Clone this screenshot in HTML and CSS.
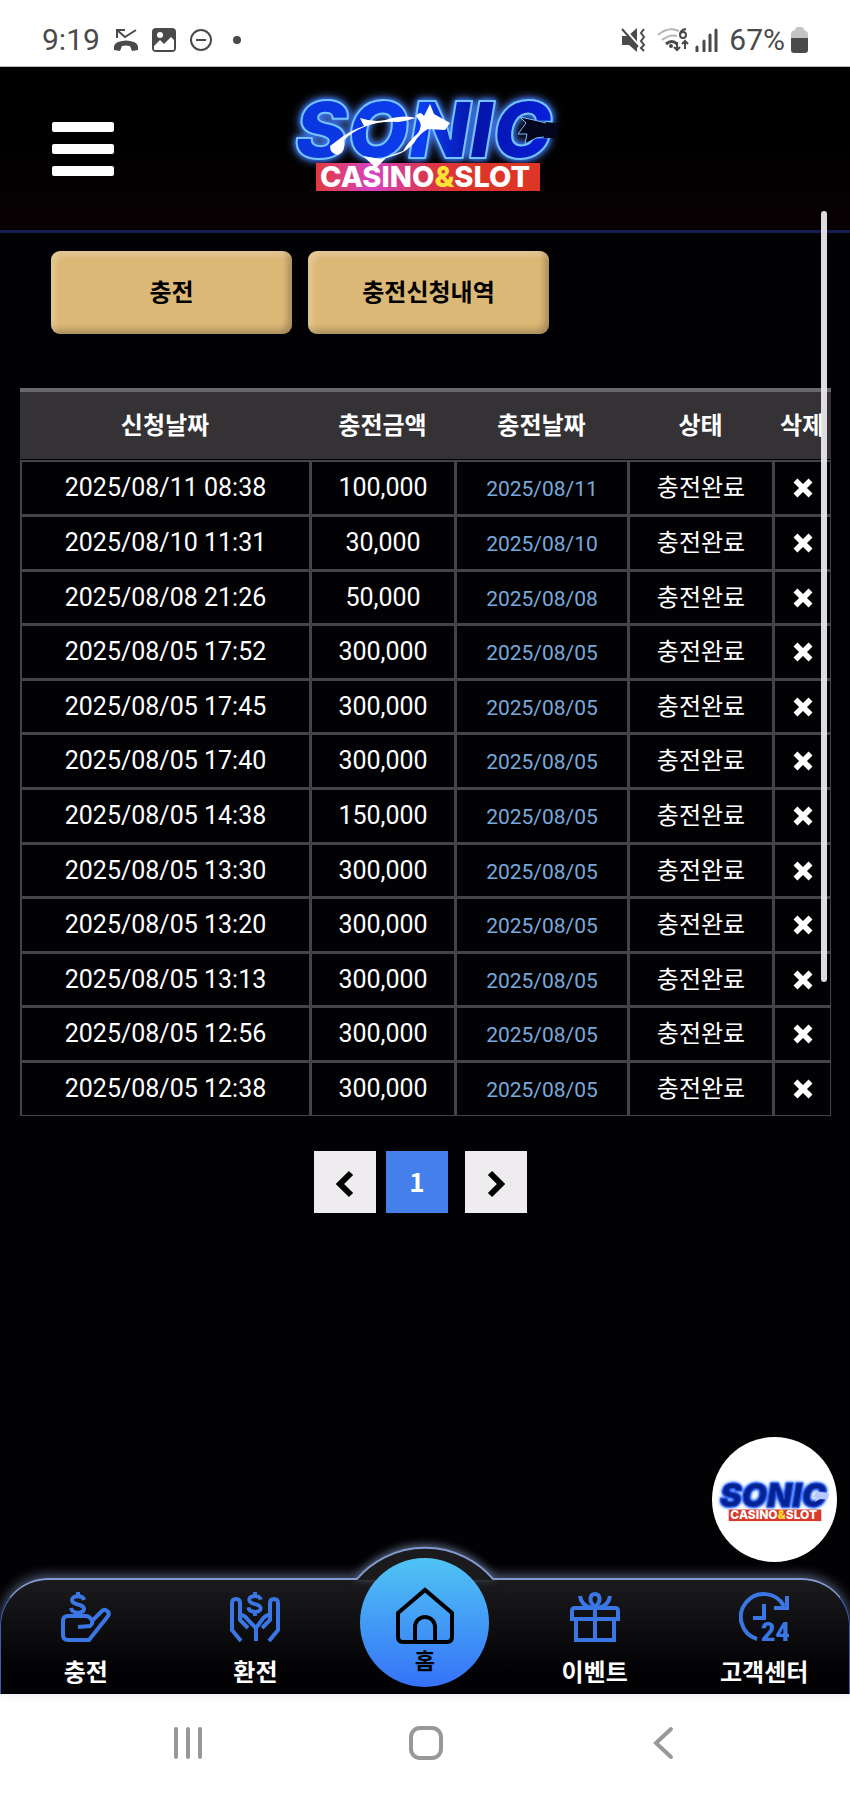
FILE: index.html
```html
<!DOCTYPE html>
<html lang="ko">
<head>
    <meta charset="UTF-8">
    <meta name="viewport" content="width=device-width, initial-scale=1">
    <title>충전신청내역</title>
    <link rel="stylesheet" href="styles.css">
</head>
<body>
    <!-- shared symbols -->
    <svg class="symbols" aria-hidden="true">
        <defs>
            <linearGradient id="word-fill" x1="0" y1="0" x2="1" y2="0">
                <stop offset="0" stop-color="#0a35dc"/>
                <stop offset="0.5" stop-color="#0c3df0"/>
                <stop offset="0.7" stop-color="#0414a8"/>
                <stop offset="1" stop-color="#0620dc"/>
            </linearGradient>
            <linearGradient id="band-fill" x1="0" y1="0" x2="1" y2="0">
                <stop offset="0" stop-color="#e03a3c"/>
                <stop offset="0.25" stop-color="#d843c4"/>
                <stop offset="0.5" stop-color="#d9354c"/>
                <stop offset="0.7" stop-color="#dd3526"/>
            </linearGradient>
        </defs>
        <symbol id="i-times" viewBox="0 0 18 18">
            <path d="M4 4l10 10M14 4L4 14" fill="none" stroke="#fff" stroke-width="5" stroke-linecap="square"/>
        </symbol>
        <symbol id="i-dollar" viewBox="0 0 18 26">
            <path d="M15 8C14 3 3 3 3 8c0 6 12 3 12 9 0 5-12 5-13-1M9 0v4M9 20v5" fill="none" stroke="#3a76e4" stroke-width="4"/>
        </symbol>
    </svg>

    <div class="status-bar">
        <div class="status-left">
            <span>9:19</span>
            <svg width="26" height="24" viewBox="0 0 26 24" aria-hidden="true">
                <path d="M4 10V2h8M4 2l8 7L23 2" fill="none" stroke="#4a4a4a" stroke-width="2"/>
                <path d="M1 22q-1-6 4-8 8-3 16 0 5 2 4 8l-6 1-2-5q-4-1-8 0l-2 5z" fill="#4a4a4a"/>
            </svg>
            <svg width="24" height="24" viewBox="0 0 24 24" aria-hidden="true">
                <rect width="24" height="24" rx="4" fill="#4a4a4a"/>
                <circle cx="8" cy="7" r="3" fill="#fff"/>
                <path d="M2 18l6-6 4 4 7-7 3 3v9q0 1-1 1H3q-1 0-1-1z" fill="#fff"/>
            </svg>
            <svg width="24" height="24" viewBox="0 0 24 24" aria-hidden="true">
                <circle cx="12" cy="12" r="10" fill="none" stroke="#4a4a4a" stroke-width="2"/>
                <path d="M7 12h10" stroke="#4a4a4a" stroke-width="2"/>
            </svg>
            <i class="dot"></i>
        </div>
        <div class="status-right">
            <svg width="26" height="24" viewBox="0 0 26 24" aria-hidden="true">
                <path d="M1 8h6l9-8v24l-8-7H1z" fill="#4a4a4a"/>
                <path d="M2 0l16 18" stroke="#fff" stroke-width="3"/>
                <path d="M1 1l16 18" stroke="#4a4a4a" stroke-width="2"/>
                <path d="M23 1l-3 4 3 4-3 4 3 4-3 3 3 3" fill="none" stroke="#4a4a4a" stroke-width="2"/>
            </svg>
            <svg class="wifi" width="32" height="24" viewBox="0 0 32 24" aria-hidden="true">
                <path d="M1 7q10-9 21-4M5 12q8-6 15-4" fill="none" stroke="#b5b5b5" stroke-width="2"/>
                <path d="M9 16q6-5 11 0" fill="none" stroke="#4a4a4a" stroke-width="3"/>
                <circle cx="14" cy="18" r="2" fill="#4a4a4a"/>
                <path d="M29 1q-6 1-6 6" fill="none" stroke="#4a4a4a" stroke-width="2"/>
                <circle cx="26" cy="7" r="3" fill="none" stroke="#4a4a4a" stroke-width="2"/>
                <path d="M20 14v8M17 19l3 3 3-3M28 21v-8M25 16l3-3 3 3" fill="none" stroke="#4a4a4a" stroke-width="2"/>
            </svg>
            <svg width="24" height="24" viewBox="0 0 24 24" aria-hidden="true">
                <path d="M2 19v4M9 13v10M15 7v16M21 2v21" stroke="#4a4a4a" stroke-width="3" stroke-linecap="round"/>
            </svg>
            <span class="percent">67%</span>
            <svg width="17" height="26" viewBox="0 0 17 26" aria-hidden="true">
                <path d="M0 7q0-3 4-4 0-3 3-3h3q3 0 3 3 4 1 4 4v5H0z" fill="#c4c4c4"/>
                <path d="M0 11h17v12q0 3-3 3H3q-3 0-3-3z" fill="#4a4a4a"/>
            </svg>
        </div>
    </div>

    <header class="header">
        <button type="button" class="menu-btn" aria-label="메뉴">
            <span></span>
            <span></span>
            <span></span>
        </button>
        <a href="#" class="logo">
            <svg width="310" height="130" viewBox="0 0 310 130" role="img" aria-label="SONIC CASINO&amp;SLOT">
                <text class="word" x="25" y="78">SONIC</text>
                <path d="M290 44l-26-4-14-3 6 6-8 11h9l-2 10 11-6 19 0z" fill="#03061c"/>
                <path d="M276 43l-12-3-14-3 6 6-8 11h9l-2 10 11-6 8-1" fill="none" stroke="#74c4ff" stroke-width="1"/>
                <rect x="46" y="83" width="224" height="28" fill="url(#band-fill)"/>
                <text class="band" x="50" y="107">CASINO<tspan fill="#fbe234">&amp;</tspan>SLOT</text>
                <path d="M68 60q11-9 26-14l-4-8q18 6 32 0 14-3 24 0-10 3-18 4-20-1-34 5-12 5-20 13 2 12-6 15-8-1-8-9zM146 36q4-6 8 0l6-12 4 10 16 9-5 7-17-1q-9 5-14 14-8 9-18 12l-10 3-10 10-13-12 18 3 22-8q6-10 15-18 4-6 2-11z" fill="#fff"/>
            </svg>
        </a>
    </header>

    <main class="main">
        <nav class="tabs">
            <button type="button" class="tab">충전</button>
            <button type="button" class="tab">충전신청내역</button>
        </nav>

        <table class="history">
            <colgroup>
                <col>
                <col class="col-amount">
                <col class="col-date">
                <col class="col-state">
                <col class="col-delete">
            </colgroup>
            <thead>
                <tr><th>신청날짜</th><th>충전금액</th><th>충전날짜</th><th>상태</th><th>삭제</th></tr>
            </thead>
            <tbody>
                <tr><td>2025/08/11 08:38</td><td>100,000</td><td class="date">2025/08/11</td><td class="state">충전완료</td><td><button type="button" class="delete" aria-label="삭제"><svg><use href="#i-times"/></svg></button></td></tr>
                <tr><td>2025/08/10 11:31</td><td>30,000</td><td class="date">2025/08/10</td><td class="state">충전완료</td><td><button type="button" class="delete" aria-label="삭제"><svg><use href="#i-times"/></svg></button></td></tr>
                <tr><td>2025/08/08 21:26</td><td>50,000</td><td class="date">2025/08/08</td><td class="state">충전완료</td><td><button type="button" class="delete" aria-label="삭제"><svg><use href="#i-times"/></svg></button></td></tr>
                <tr><td>2025/08/05 17:52</td><td>300,000</td><td class="date">2025/08/05</td><td class="state">충전완료</td><td><button type="button" class="delete" aria-label="삭제"><svg><use href="#i-times"/></svg></button></td></tr>
                <tr><td>2025/08/05 17:45</td><td>300,000</td><td class="date">2025/08/05</td><td class="state">충전완료</td><td><button type="button" class="delete" aria-label="삭제"><svg><use href="#i-times"/></svg></button></td></tr>
                <tr><td>2025/08/05 17:40</td><td>300,000</td><td class="date">2025/08/05</td><td class="state">충전완료</td><td><button type="button" class="delete" aria-label="삭제"><svg><use href="#i-times"/></svg></button></td></tr>
                <tr><td>2025/08/05 14:38</td><td>150,000</td><td class="date">2025/08/05</td><td class="state">충전완료</td><td><button type="button" class="delete" aria-label="삭제"><svg><use href="#i-times"/></svg></button></td></tr>
                <tr><td>2025/08/05 13:30</td><td>300,000</td><td class="date">2025/08/05</td><td class="state">충전완료</td><td><button type="button" class="delete" aria-label="삭제"><svg><use href="#i-times"/></svg></button></td></tr>
                <tr><td>2025/08/05 13:20</td><td>300,000</td><td class="date">2025/08/05</td><td class="state">충전완료</td><td><button type="button" class="delete" aria-label="삭제"><svg><use href="#i-times"/></svg></button></td></tr>
                <tr><td>2025/08/05 13:13</td><td>300,000</td><td class="date">2025/08/05</td><td class="state">충전완료</td><td><button type="button" class="delete" aria-label="삭제"><svg><use href="#i-times"/></svg></button></td></tr>
                <tr><td>2025/08/05 12:56</td><td>300,000</td><td class="date">2025/08/05</td><td class="state">충전완료</td><td><button type="button" class="delete" aria-label="삭제"><svg><use href="#i-times"/></svg></button></td></tr>
                <tr><td>2025/08/05 12:38</td><td>300,000</td><td class="date">2025/08/05</td><td class="state">충전완료</td><td><button type="button" class="delete" aria-label="삭제"><svg><use href="#i-times"/></svg></button></td></tr>
            </tbody>
        </table>

        <div class="pagination">
            <button type="button" class="page" aria-label="이전">
                <svg width="18" height="28" viewBox="0 0 18 28"><path d="M15 3L4 14l11 11" fill="none" stroke="#000" stroke-width="6"/></svg>
            </button>
            <button type="button" class="page active">1</button>
            <button type="button" class="page next" aria-label="다음">
                <svg width="18" height="28" viewBox="0 0 18 28"><path d="M3 3l11 11L3 25" fill="none" stroke="#000" stroke-width="6"/></svg>
            </button>
        </div>
    </main>

    <div class="scroll-thumb"></div>

    <nav class="bottom-nav">
        <svg class="bump" width="190" height="60" viewBox="0 0 190 60" aria-hidden="true">
            <path d="M26 60A90 90 0 0 1 164 60z" fill="#1b1b1d"/>
            <path d="M26 60A90 90 0 0 1 164 60" fill="none" stroke="#8198d0" stroke-width="2"/>
        </svg>
        <a href="#" class="float-btn">
            <svg width="124" height="58" viewBox="8 -10 300 140" role="img" aria-label="SONIC CASINO&amp;SLOT">
                <text class="word small" x="25" y="78">SONIC</text>
                <path d="M290 44l-26-4-14-3 6 6-8 11h9l-2 10 11-6 19 0z" fill="#b9c9ff"/>
                <rect x="46" y="83" width="224" height="28" fill="#d83a2c"/>
                <text class="band" x="50" y="107">CASINO<tspan fill="#fbe234">&amp;</tspan>SLOT</text>
            </svg>
        </a>
        <a href="#" class="nav-item">
            <svg width="50" height="50" viewBox="0 0 50 50" aria-hidden="true">
                <use href="#i-dollar" x="8" y="0" width="18" height="26"/>
                <path d="M17 35l12-1q4-3 1-7-2-3-5-3H7q-5 0-5 5v14q0 5 5 5h21l19-24q2-3-1-5-3-3-6 1L30 30" fill="none" stroke="#3a76e4" stroke-width="4"/>
            </svg>
            <span>충전</span>
        </a>
        <a href="#" class="nav-item">
            <svg width="50" height="50" viewBox="0 0 50 50" aria-hidden="true">
                <use href="#i-dollar" x="16" y="0" width="18" height="25"/>
                <path d="M11 49L2 38V11q0-4 4-4t4 4v17l8 8M10 23q5 0 8 5l8 8v13M39 49l9-11V11q0-4-4-4t-4 4v17l-8 8M40 23q-5 0-8 5l-6 8" fill="none" stroke="#3a76e4" stroke-width="4"/>
            </svg>
            <span>환전</span>
        </a>
        <a href="#" class="nav-home">
            <svg width="58" height="57" viewBox="0 0 58 57" aria-hidden="true">
                <path d="M2 26L29 3l27 23v24q0 5-5 5H7q-5 0-5-5zM19 55V40a10 10 0 0 1 20 0v15" fill="none" stroke="#000" stroke-width="4"/>
            </svg>
            <span>홈</span>
        </a>
        <a href="#" class="nav-item">
            <svg width="50" height="50" viewBox="0 0 50 50" aria-hidden="true">
                <path d="M5 16h40q3 0 3 3v8H2v-8q0-3 3-3zM6 27v21h38V27M25 16v32M25 15c-7-6-5-13 0-13s7 7 0 13M10 4q1 9 11 12M40 4q-1 9-11 12" fill="none" stroke="#3a76e4" stroke-width="4"/>
            </svg>
            <span>이벤트</span>
        </a>
        <a href="#" class="nav-item">
            <svg width="50" height="50" viewBox="0 0 50 50" aria-hidden="true">
                <path d="M18 47A23 23 0 1 1 45 14M48 4v12H35M25 12v14H14" fill="none" stroke="#3a76e4" stroke-width="4"/>
                <text class="hours" x="22" y="49">24</text>
            </svg>
            <span>고객센터</span>
        </a>
    </nav>

    <div class="system-nav">
        <button type="button" aria-label="최근 앱">
            <svg width="34" height="34" viewBox="0 0 34 34"><path d="M5 3v28M17 3v28M29 3v28" stroke="#989898" stroke-width="4" stroke-linecap="round"/></svg>
        </button>
        <button type="button" aria-label="홈 화면">
            <svg width="34" height="34" viewBox="0 0 34 34"><rect x="2" y="2" width="30" height="30" rx="9" fill="none" stroke="#989898" stroke-width="4"/></svg>
        </button>
        <button type="button" aria-label="뒤로">
            <svg width="34" height="34" viewBox="0 0 34 34"><path d="M25 3L10 17l15 14" fill="none" stroke="#989898" stroke-width="4" stroke-linecap="round"/></svg>
        </button>
    </div>
</body>
</html>
```
FILE: styles.css
```css
* {
    box-sizing: border-box;
}
body {
    position: relative;
    display: flex;
    flex-direction: column;
    min-height: 100vh;
    margin: 0;
    background: #020104;
    color: #fff;
    font-family: Roboto, 'Noto Sans CJK KR', sans-serif;
    font-size: 24px;
}
button {
    padding: 0;
    border: 0;
    background: none;
    color: inherit;
    font: inherit;
    cursor: pointer;
}
a {
    color: inherit;
    text-decoration: none;
}
svg {
    display: block;
}
.symbols {
    position: absolute;
    width: 0;
    height: 0;
}

/* status bar */
.status-bar {
    display: flex;
    justify-content: space-between;
    align-items: center;
    height: 67px;
    padding: 14px 42px 0;
    border-bottom: 1px solid #bbb;
    background: #fff;
    color: #4a4a4a;
    font-size: 30px;
    line-height: 36px;
}
.status-left {
    display: flex;
    align-items: center;
    gap: 13px;
}
.status-right {
    display: flex;
    align-items: center;
    gap: 6px;
}
.wifi {
    margin-left: 4px;
}
.dot {
    width: 8px;
    height: 8px;
    margin-left: 7px;
    border-radius: 50%;
    background: #4a4a4a;
}
.percent {
    margin-left: 4px;
}

/* header */
.header {
    display: grid;
    grid-template-columns: 1fr auto 1fr;
    align-items: center;
    padding: 13px 52px 20px;
    border-bottom: 3px solid #161f4f;
    background: linear-gradient(#000 40%, #080103);
}
.menu-btn {
    display: flex;
    flex-direction: column;
    gap: 12px;
    width: 62px;
    margin-top: 8px;
}
.menu-btn span {
    height: 10px;
    border-radius: 2px;
    background: #fff;
}
.word {
    fill: url(#word-fill);
    stroke: #74c4ff;
    stroke-width: 2px;
    stroke-linejoin: round;
    font-family: Inter, sans-serif;
    font-size: 79px;
    font-weight: 900;
    font-style: italic;
    filter: drop-shadow(0 0 2px #2a66ff) drop-shadow(0 0 4px #5a90ff);
}
.word.small {
    fill: #062190;
    stroke: #2454e0;
    stroke-width: 3px;
}
.band {
    fill: #fff;
    font-family: Inter, sans-serif;
    font-size: 29px;
    font-weight: 800;
}

/* content */
.main {
    flex: 1;
    padding: 18px 19px 0 20px;
}
.tabs {
    display: flex;
    gap: 16px;
    padding-left: 31px;
}
.tab {
    width: 241px;
    height: 83px;
    padding-bottom: 4px;
    border-radius: 9px;
    background: #dcb876;
    box-shadow: inset 4px 4px 6px rgba(255, 255, 255, 0.25), inset -4px -4px 6px rgba(0, 0, 0, 0.25);
    color: #000;
    font-weight: 700;
}
.history {
    width: 100%;
    margin-top: 54px;
    border-collapse: separate;
    border-spacing: 0;
    table-layout: fixed;
    text-align: center;
}
.col-amount,
.col-state {
    width: 145px;
}
.col-date {
    width: 173px;
}
.col-delete {
    width: 58px;
}
.history th {
    height: 72px;
    padding: 0 0 4px;
    border-top: 4px solid #6a686b;
    border-bottom: 1px solid #000;
    background: #353235;
    font-weight: 700;
    white-space: nowrap;
}
.history td {
    height: 55px;
    padding: 0;
    border: 1px solid #454346;
    border-width: 2px 1px 1px 2px;
    font-size: 25px;
    line-height: 30px;
}
.history tr:nth-child(5n) td,
.history tr:nth-child(5n+3) td {
    height: 54px;
}
.history .date {
    padding-top: 2px;
    color: #78a9dc;
    font-size: 21px;
}
.history .state {
    font-size: 24px;
}
.delete {
    display: block;
    margin: 0 auto;
}
.delete svg {
    width: 20px;
    height: 20px;
}

.pagination {
    display: flex;
    justify-content: center;
    gap: 10px;
    margin-top: 35px;
    padding-right: 10px;
}
.page {
    display: flex;
    align-items: center;
    justify-content: center;
    width: 62px;
    height: 62px;
    padding-top: 4px;
    background: #efecef;
    color: #fff;
    font-weight: 700;
}
.page.active {
    padding: 0 0 4px;
    background: #447fec;
    font-family: 'Noto Sans CJK KR', sans-serif;
    font-size: 26px;
}
.page.next {
    margin-left: 7px;
}

.scroll-thumb {
    position: absolute;
    top: 211px;
    right: 23px;
    width: 6px;
    height: 771px;
    border-radius: 3px;
    background: rgba(235, 232, 235, 0.94);
}

/* bottom nav */
.bottom-nav {
    position: relative;
    display: grid;
    grid-template-columns: repeat(5, 1fr);
    height: 116px;
    border: 1px solid #3c5fae;
    border-top: 2px solid #8198d0;
    border-bottom: 0;
    border-radius: 48px 48px 0 0;
    background: linear-gradient(#1b1b1d, #020104 80%);
    box-shadow: 0 -3px 12px rgba(150, 175, 215, 0.5);
}
.bump {
    position: absolute;
    top: -60px;
    left: 50%;
    margin-left: -95px;
    filter: drop-shadow(0 -2px 4px rgba(150, 175, 215, 0.6));
}
.nav-item {
    display: flex;
    flex-direction: column;
    align-items: center;
    gap: 13px;
    padding-top: 12px;
    font-weight: 700;
    line-height: 36px;
}
.hours {
    fill: #3a76e4;
    font-family: Roboto, sans-serif;
    font-size: 25px;
    font-weight: 900;
}
.nav-home {
    position: relative;
    display: flex;
    flex-direction: column;
    align-items: center;
    justify-self: center;
    width: 129px;
    height: 129px;
    margin-top: -22px;
    padding-top: 29px;
    border-radius: 50%;
    background: linear-gradient(#50c4f4, #3572f8);
    color: #000;
    font-size: 22px;
    font-weight: 700;
    line-height: 36px;
}
.float-btn {
    position: absolute;
    top: -143px;
    right: 12px;
    display: flex;
    align-items: center;
    justify-content: center;
    width: 125px;
    height: 125px;
    border-radius: 50%;
    background: #fff;
}

.system-nav {
    display: flex;
    justify-content: space-between;
    align-items: center;
    height: 100px;
    padding: 0 170px 2px 171px;
    background: #fff;
}
```
